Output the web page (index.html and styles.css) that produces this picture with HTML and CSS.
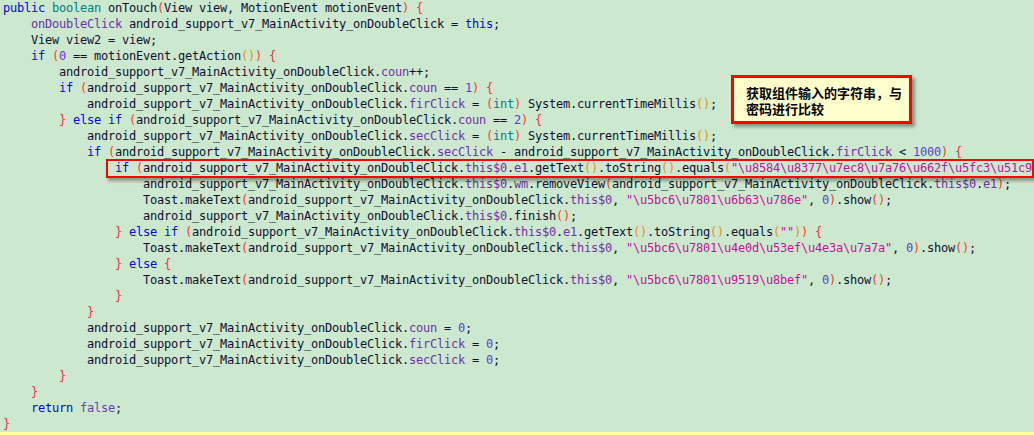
FILE: index.html
```html
<!DOCTYPE html>
<html lang="zh">
<head>
    <meta charset="UTF-8">
    <title>onTouch</title>
    <link rel="stylesheet" href="styles.css">
</head>
<body>
    <div class="editor">
<div class="line"><span class="k">public</span> <span class="t">boolean</span> <span class="m">onTouch</span><span class="p">(</span>View view, MotionEvent motionEvent<span class="p">)</span> <span class="b">{</span></div>
<div class="line">    <span class="c">onDoubleClick</span> android_support_v7_MainActivity_onDoubleClick = <span class="k">this</span>;</div>
<div class="line">    View view2 = view;</div>
<div class="line">    <span class="k">if</span> <span class="p">(</span><span class="n">0</span> == motionEvent.getAction<span class="p2">()</span><span class="p">)</span> <span class="b">{</span></div>
<div class="line">        android_support_v7_MainActivity_onDoubleClick.<span class="f">coun</span>++;</div>
<div class="line">        <span class="k">if</span> <span class="p">(</span>android_support_v7_MainActivity_onDoubleClick.<span class="f">coun</span> == <span class="n">1</span><span class="p">)</span> <span class="b">{</span></div>
<div class="line">            android_support_v7_MainActivity_onDoubleClick.<span class="f">firClick</span> = <span class="p">(</span><span class="t">int</span><span class="p">)</span> System.currentTimeMillis<span class="p2">()</span>;</div>
<div class="line">        <span class="b">}</span> <span class="k">else if</span> <span class="p">(</span>android_support_v7_MainActivity_onDoubleClick.<span class="f">coun</span> == <span class="n">2</span><span class="p">)</span> <span class="b">{</span></div>
<div class="line">            android_support_v7_MainActivity_onDoubleClick.<span class="f">secClick</span> = <span class="p">(</span><span class="t">int</span><span class="p">)</span> System.currentTimeMillis<span class="p2">()</span>;</div>
<div class="line">            <span class="k">if</span> <span class="p">(</span>android_support_v7_MainActivity_onDoubleClick.<span class="f">secClick</span> - android_support_v7_MainActivity_onDoubleClick.<span class="f">firClick</span> &lt; <span class="n">1000</span><span class="p">)</span> <span class="b">{</span></div>
<div class="line">                <span class="k">if</span> <span class="p">(</span>android_support_v7_MainActivity_onDoubleClick.<span class="f">this$0</span>.<span class="f">e1</span>.getText<span class="p2">()</span>.toString<span class="p2">()</span>.equals<span class="p2">(</span><span class="s">"\u8584\u8377\u7ec8\u7a76\u662f\u5fc3\u51c9</span></div>
<div class="line">                    android_support_v7_MainActivity_onDoubleClick.<span class="f">this$0</span>.<span class="f">wm</span>.removeView<span class="p">(</span>android_support_v7_MainActivity_onDoubleClick.<span class="f">this$0</span>.<span class="f">e1</span><span class="p">)</span>;</div>
<div class="line">                    Toast.makeText<span class="p">(</span>android_support_v7_MainActivity_onDoubleClick.<span class="f">this$0</span>, <span class="s">"\u5bc6\u7801\u6b63\u786e"</span>, <span class="n">0</span><span class="p">)</span>.show<span class="p">()</span>;</div>
<div class="line">                    android_support_v7_MainActivity_onDoubleClick.<span class="f">this$0</span>.finish<span class="p">()</span>;</div>
<div class="line">                <span class="b">}</span> <span class="k">else if</span> <span class="p">(</span>android_support_v7_MainActivity_onDoubleClick.<span class="f">this$0</span>.<span class="f">e1</span>.getText<span class="p2">()</span>.toString<span class="p2">()</span>.equals<span class="p2">(</span><span class="s">""</span><span class="p2">)</span><span class="p">)</span> <span class="b">{</span></div>
<div class="line">                    Toast.makeText<span class="p">(</span>android_support_v7_MainActivity_onDoubleClick.<span class="f">this$0</span>, <span class="s">"\u5bc6\u7801\u4e0d\u53ef\u4e3a\u7a7a"</span>, <span class="n">0</span><span class="p">)</span>.show<span class="p">()</span>;</div>
<div class="line">                <span class="b">}</span> <span class="k">else</span> <span class="b">{</span></div>
<div class="line">                    Toast.makeText<span class="p">(</span>android_support_v7_MainActivity_onDoubleClick.<span class="f">this$0</span>, <span class="s">"\u5bc6\u7801\u9519\u8bef"</span>, <span class="n">0</span><span class="p">)</span>.show<span class="p">()</span>;</div>
<div class="line">                <span class="b">}</span></div>
<div class="line">            <span class="b">}</span></div>
<div class="line">            android_support_v7_MainActivity_onDoubleClick.<span class="f">coun</span> = <span class="n">0</span>;</div>
<div class="line">            android_support_v7_MainActivity_onDoubleClick.<span class="f">firClick</span> = <span class="n">0</span>;</div>
<div class="line">            android_support_v7_MainActivity_onDoubleClick.<span class="f">secClick</span> = <span class="n">0</span>;</div>
<div class="line">        <span class="b">}</span></div>
<div class="line">    <span class="b">}</span></div>
<div class="line">    <span class="k">return</span> <span class="v">false</span>;</div>
<div class="line"><span class="b">}</span></div>
<div class="line current"> </div>
    </div>

    <!-- annotation overlays -->
    <div class="mark"></div>
    <div class="note">获取组件输入的字符串，与<br>密码进行比较</div>
</body>
</html>
```

FILE: styles.css
```css
html, body {
    margin: 0;
    padding: 0;
    background-color: #cce8cf;
    width: 1034px;
    height: 435px;
    overflow: hidden;
}
body {
    position: relative;
}
.editor {
    font-family: "DejaVu Sans Mono", "Liberation Mono", monospace;
    font-size: 12px;
    letter-spacing: -0.225px;
    color: #101030;
}
.line {
    height: 16px;
    line-height: 16px;
    padding-left: 3px;
    white-space: pre;
    overflow: hidden;
}
.line.current {
    background-color: #ffff9e;
}
.k { color: #0000ff; }
.t { color: #008080; }
.c { color: #6a2fa8; }
.m { color: #101030; }
.f { color: #7032a8; }
.v { color: #6a3fb0; }
.n { color: #5a3fd0; }
.s { color: #c8109c; }
.p { color: #ff3c28; }
.p2 { color: #e8901c; }
.b { color: #ff2850; }

.mark {
    position: absolute;
    left: 106px;
    top: 159px;
    width: 924px;
    height: 15px;
    border: 2px solid #ff0000;
    box-shadow: 2px 3px 3px rgba(0,0,0,0.35);
}
.note {
    position: absolute;
    left: 731px;
    top: 75px;
    width: 163px;
    height: 36px;
    padding: 7px 0 0 12px;
    border: 3px solid #ff0000;
    background-color: #ffffcc;
    box-shadow: 3px 3px 3px rgba(0,0,0,0.35);
    font-family: "Noto Sans CJK SC", sans-serif;
    font-weight: bold;
    font-size: 13px;
    line-height: 16px;
    color: #000000;
}
```
